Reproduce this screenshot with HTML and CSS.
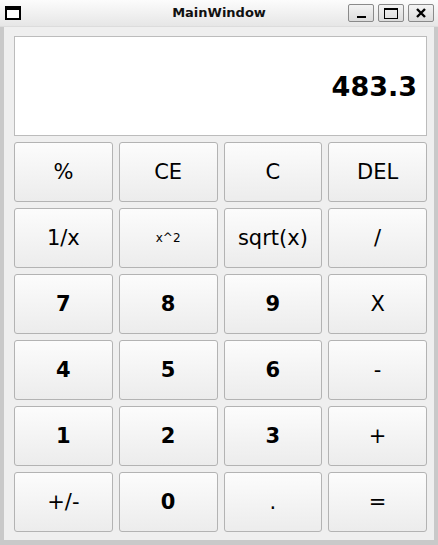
FILE: index.html
```html
<!DOCTYPE html>
<html>
<head>
<meta charset="utf-8">
<link rel="stylesheet" href="styles.css">
</head>
<body>
<div class="window">
  <div class="titlebar">
    <div class="app-icon"></div>
    <div class="title">MainWindow</div>
    <div class="wbtns">
      <div class="wbtn"><span class="min-glyph"></span></div>
      <div class="wbtn"><span class="max-glyph"></span></div>
      <div class="wbtn">
        <svg width="12" height="12" viewBox="0 0 12 12"><path d="M2 2 L10 10 M10 2 L2 10" stroke="#000" stroke-width="2.4"/></svg>
      </div>
    </div>
  </div>
  <div class="frame">
    <div class="central">
      <div class="display">483.3</div>
      <div class="keys">
        <button class="key">%</button>
        <button class="key">CE</button>
        <button class="key">C</button>
        <button class="key">DEL</button>
        <button class="key">1/x</button>
        <button class="key small">x^2</button>
        <button class="key">sqrt(x)</button>
        <button class="key">/</button>
        <button class="key bold">7</button>
        <button class="key bold">8</button>
        <button class="key bold">9</button>
        <button class="key">X</button>
        <button class="key bold">4</button>
        <button class="key bold">5</button>
        <button class="key bold">6</button>
        <button class="key">-</button>
        <button class="key bold">1</button>
        <button class="key bold">2</button>
        <button class="key bold">3</button>
        <button class="key">+</button>
        <button class="key">+/-</button>
        <button class="key bold">0</button>
        <button class="key">.</button>
        <button class="key">=</button>
      </div>
    </div>
  </div>
</div>
</body>
</html>
```
FILE: styles.css
```css
* { box-sizing: border-box; }
html, body { margin: 0; padding: 0; }
body {
  width: 438px;
  height: 545px;
  overflow: hidden;
  font-family: "DejaVu Sans", sans-serif;
  background: #c9c9c9;
}
.window {
  display: flex;
  flex-direction: column;
  height: 545px;
}
.titlebar {
  height: 27px;
  flex: none;
  display: flex;
  align-items: center;
  position: relative;
  background: linear-gradient(#fcfcfc, #e6e6e6);
  border-bottom: 1px solid #dcdcdc;
}
.app-icon {
  margin-left: 5px;
  width: 16px;
  height: 14px;
  border: 2px solid #000;
  border-top-width: 4px;
  background: #fff;
}
.title {
  position: absolute;
  left: 0;
  right: 0;
  text-align: center;
  font-weight: bold;
  font-size: 13px;
  color: #111;
  pointer-events: none;
  top: 5px;
}
.wbtns {
  margin-left: auto;
  margin-right: 4px;
  display: flex;
  gap: 4px;
}
.wbtn {
  width: 26px;
  height: 18px;
  border: 1px solid #8a8a8a;
  border-radius: 2px;
  background: linear-gradient(#f4f4f4, #dcdcdc);
  display: flex;
  align-items: center;
  justify-content: center;
}
.min-glyph {
  width: 9px;
  height: 2px;
  background: #000;
  margin-top: 8px;
}
.max-glyph {
  width: 14px;
  height: 11px;
  border: 1.5px solid #000;
  border-top-width: 2px;
}
.frame {
  flex: 1;
  padding: 0 4px 5px 4px;
  display: flex;
}
.central {
  flex: 1;
  background: #efefef;
  padding: 9px 7px 8px 10px;
  display: flex;
  flex-direction: column;
  gap: 6px;
}
.display {
  height: 100px;
  flex: none;
  background: #fff;
  border: 1px solid #bcbcbc;
  display: flex;
  align-items: center;
  justify-content: flex-end;
  padding-right: 9px;
  padding-bottom: 0;
  font-weight: bold;
  font-size: 27px;
  color: #000;
}
.keys {
  display: grid;
  grid-template-columns: repeat(4, 1fr);
  grid-auto-rows: 60px;
  gap: 6px;
}
.key {
  font-family: "DejaVu Sans", sans-serif;
  font-size: 21px;
  color: #000;
  border: 1px solid #b3b3b3;
  border-radius: 3px;
  background: linear-gradient(#fcfcfc, #ececec);
  padding: 0;
  margin: 0;
}
.key.bold { font-weight: bold; }
.key.small { font-size: 12px; }
```
